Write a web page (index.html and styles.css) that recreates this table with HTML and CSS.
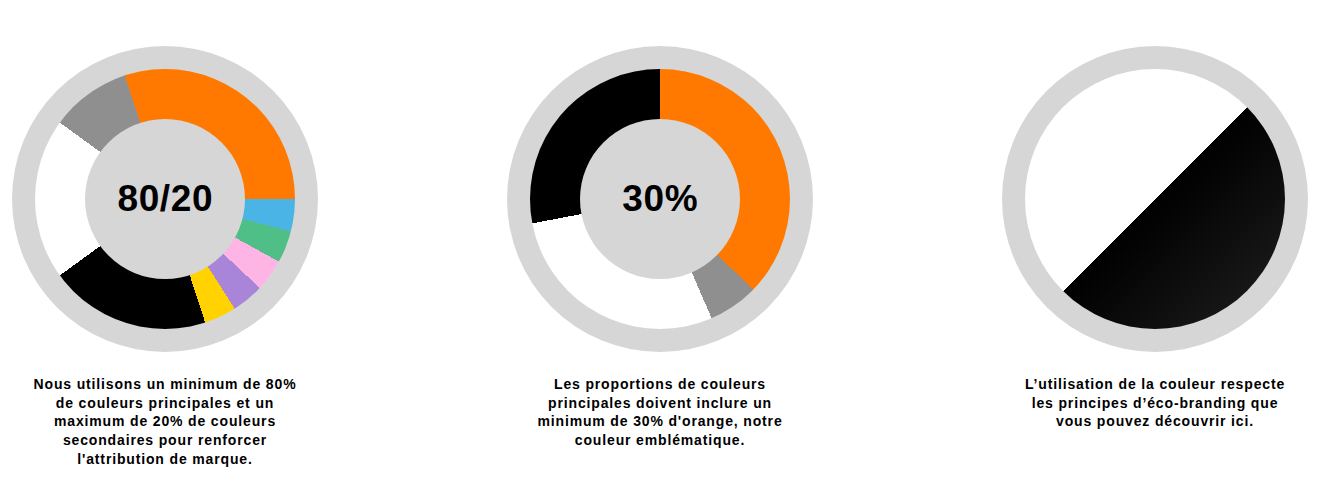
FILE: index.html
```
<!DOCTYPE html>
<html lang="fr">
<head>
<meta charset="utf-8">
<title>Couleurs</title>
<link rel="stylesheet" href="styles.css">
</head>
<body>
<main class="charts">
  <section class="col">
    <div class="ring">
      <div class="pie pie-8020">
        <div class="label">80/20</div>
      </div>
    </div>
    <p class="caption">Nous utilisons un minimum de 80% de couleurs principales et un maximum de 20% de couleurs secondaires pour renforcer l'attribution de marque.</p>
  </section>
  <section class="col">
    <div class="ring">
      <div class="pie pie-30">
        <div class="label">30%</div>
      </div>
    </div>
    <p class="caption">Les proportions de couleurs principales doivent inclure un minimum de 30% d'orange, notre couleur emblématique.</p>
  </section>
  <section class="col">
    <div class="ring">
      <div class="pie pie-half"></div>
    </div>
    <p class="caption">L’utilisation de la couleur respecte les principes d’éco-branding que vous pouvez découvrir ici.</p>
  </section>
</main>
</body>
</html>
```
FILE: styles.css
```
html, body {
  margin: 0;
  padding: 0;
  background: #ffffff;
}

body {
  font-family: "Liberation Sans", Arial, sans-serif;
  color: #000000;
}

.charts {
  display: flex;
  gap: 189px;
  padding: 46px 0 0 12px;
}

.col {
  width: 306px;
  display: flex;
  flex-direction: column;
  align-items: center;
}

.ring {
  width: 306px;
  height: 306px;
  box-sizing: border-box;
  padding: 23px;
  border-radius: 50%;
  background: #d6d6d6;
}

.pie {
  width: 100%;
  height: 100%;
  border-radius: 50%;
  display: flex;
  align-items: center;
  justify-content: center;
}

.pie-8020 {
  background: conic-gradient(from -18deg,
    #ff7900 0deg 108deg,
    #4bb4e6 108deg 122.4deg,
    #50be87 122.4deg 136.8deg,
    #ffb4e6 136.8deg 151.2deg,
    #a885d8 151.2deg 165.6deg,
    #ffd200 165.6deg 180deg,
    #000000 180deg 252deg,
    #ffffff 252deg 324deg,
    #8f8f8f 324deg 360deg);
}

.pie-30 {
  background: conic-gradient(
    #ff7900 0deg 134.2deg,
    #8f8f8f 134.2deg 156.6deg,
    #ffffff 156.6deg 259.2deg,
    #000000 259.2deg 360deg);
}

.pie-half {
  background: linear-gradient(135deg, #ffffff 50%, #000000 50%, #202020 100%);
}

.label {
  width: 160px;
  height: 160px;
  border-radius: 50%;
  background: #d6d6d6;
  display: flex;
  align-items: center;
  justify-content: center;
  font-size: 37px;
  font-weight: 700;
  letter-spacing: 0.6px;
  padding: 0 0 0 0.6px;
  box-sizing: border-box;
}

.caption {
  width: 274px;
  margin: 23px 0 0 0;
  text-align: center;
  font-size: 14px;
  font-weight: 700;
  line-height: 18.7px;
  letter-spacing: 0.85px;
}
```
